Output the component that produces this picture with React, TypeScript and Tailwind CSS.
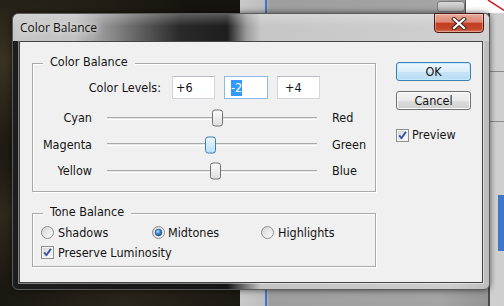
import React from "react";

const ui = "font-['DejaVu_Sans_Condensed','DejaVu_Sans',sans-serif]";

function Radio({ checked }: { checked?: boolean }) {
  return (
    <svg width="13" height="13" viewBox="0 0 13 13" className="shrink-0">
      <defs>
        <linearGradient id="rOut" x1="0" y1="0" x2="1" y2="1">
          <stop offset="0" stopColor="#cfcfcf" />
          <stop offset="1" stopColor="#ffffff" />
        </linearGradient>
        <linearGradient id="rIn" x1="0" y1="0" x2="1" y2="1">
          <stop offset="0" stopColor="#d9d9d9" />
          <stop offset="1" stopColor="#f7f7f7" />
        </linearGradient>
        <radialGradient id="rDot" cx="0.4" cy="0.35" r="0.7">
          <stop offset="0" stopColor="#b9e3ff" />
          <stop offset="0.45" stopColor="#3f8fd4" />
          <stop offset="1" stopColor="#15477c" />
        </radialGradient>
      </defs>
      <circle cx="6.5" cy="6.5" r="6" fill="url(#rOut)" stroke="#8a8c8c" strokeWidth="1" />
      <circle cx="6.5" cy="6.5" r="4.3" fill="url(#rIn)" />
      {checked && <circle cx="6.5" cy="6.5" r="3.4" fill="url(#rDot)" stroke="#1d4f86" strokeWidth="0.6" />}
    </svg>
  );
}

function Check() {
  return (
    <svg width="13" height="13" viewBox="0 0 13 13" className="shrink-0">
      <defs>
        <linearGradient id="cIn" x1="0" y1="0" x2="1" y2="1">
          <stop offset="0" stopColor="#d6d6d6" />
          <stop offset="1" stopColor="#fbfbfb" />
        </linearGradient>
      </defs>
      <rect x="0.5" y="0.5" width="12" height="12" fill="#f4f4f4" stroke="#8e8f8f" />
      <rect x="2" y="2" width="9" height="9" fill="url(#cIn)" />
      <path d="M3.2 6.4 L5.4 9.2 L9.9 2.9" fill="none" stroke="#3b56a3" strokeWidth="1.9" strokeLinejoin="round" />
    </svg>
  );
}

function Slider({ left, right, value, hot }: { left: string; right: string; value: number; hot?: boolean }) {
  const pos = ((value + 100) / 200) * 199;
  return (
    <div className="flex h-[26.5px] items-center">
      <div className="w-[59px] text-right">{left}</div>
      <div className="relative ml-[15px] h-[3px] w-[210px] border-t border-b border-t-[#a9a9a9] border-b-white bg-[#e6e8e8]">
        <div
          className={
            hot
              ? "absolute top-1/2 h-[17px] w-[11px] -translate-y-1/2 rounded-[3px] border border-[#3c7fb1] bg-[linear-gradient(180deg,#eef8fe,#b7e0f7)]"
              : "absolute top-1/2 h-[17px] w-[11px] -translate-y-1/2 rounded-[3px] border border-[#707070] bg-[linear-gradient(180deg,#fdfdfd,#dedede)]"
          }
          style={{ left: pos }}
        />
      </div>
      <div className="ml-[15px]">{right}</div>
    </div>
  );
}

function Group({ title, className, children }: { title: string; className: string; children: React.ReactNode }) {
  return (
    <div className={"relative border border-[#a9a9a9] shadow-[inset_1px_1px_0_#ffffff,1px_1px_0_#ffffff] " + className}>
      <div className="absolute left-[10px] top-[-10px] h-[16px] bg-[#f0f0f0] px-[7px] leading-[16px]">{title}</div>
      {children}
    </div>
  );
}

export default function App() {
  return (
    <div className="relative h-[306px] w-[504px] overflow-hidden bg-[#17140f]">
      {/* desktop: dark photo on left */}
      <div className="absolute inset-0 bg-[radial-gradient(ellipse_at_2%_20%,#3a3322_0%,transparent_30%),radial-gradient(ellipse_at_3%_70%,#2f2a1d_0%,transparent_25%),radial-gradient(ellipse_at_25%_100%,#2a251b_0%,transparent_30%)]" />
      {/* photoshop panel on right */}
      <div className="absolute bottom-0 left-[240px] right-0 top-0 bg-[linear-gradient(90deg,#c9c9c9_0px,#bdbdbd_24px,#9e9e9e_30px,#a4a4a4_200px,#8e8e8e_264px)]">
        <div className="absolute bottom-0 left-[25px] top-0 w-[2px] bg-[#3d78c7]" />
        <div className="absolute left-[197px] top-[1px] h-[11px] w-[28px] rounded-[3px] border border-[#7a7a7a] bg-[linear-gradient(180deg,#d8d8d8,#b4b4b4)]" />
        <div className="absolute right-0 top-0 h-[13px] w-[39px] border-l border-[#555] bg-white">
          <svg width="39" height="13" className="absolute inset-0">
            <line x1="22" y1="0" x2="39" y2="11" stroke="#d21f1f" strokeWidth="1.5" />
          </svg>
        </div>
        <div className="absolute bottom-0 right-0 top-[13px] w-[16px] bg-[#cfcfcf]">
          <div className="absolute left-0 top-0 h-full w-[2px] bg-[#4b4b4b]" />
          <div className="absolute left-0 right-0 top-[58px] h-[1px] bg-[#8a8a8a]" />
          <div className="absolute left-0 right-0 top-[108px] h-[1px] bg-[#8a8a8a]" />
          <div className="absolute right-0 top-[182px] h-[56px] w-[6px] bg-[#3d78c7]" />
        </div>
      </div>

      {/* dialog window */}
      <div className="absolute left-[12px] top-[13px] flex h-[277px] w-[478px] flex-col rounded-[6px] border border-[#5b5b5b] bg-[linear-gradient(90deg,#1d1d1d_0%,#151515_45%,#7a7a7a_49%,#c3c3c3_52%,#cdcdcd_92%,#bdbdbd_100%)] shadow-[0_0_6px_rgba(0,0,0,0.6)]">
        {/* title bar */}
        <div className="relative h-[27px] shrink-0 rounded-t-[5px] bg-[linear-gradient(90deg,#c7c7c7_0%,#c0c0c0_13%,#6b6b6b_25%,#2a2a2a_35%,#1e1e1e_45%,#9a9a9a_49%,#c6c6c6_52%,#d1d1d1_100%)]">
          <div className="absolute inset-x-0 top-0 h-[12px] rounded-t-[5px] bg-[linear-gradient(180deg,rgba(255,255,255,0.25),rgba(255,255,255,0))]" />
          <div className="relative pl-[7px] pt-[6px] font-['Open_Sans',sans-serif] text-[12px] leading-[16px] text-[#111] [text-shadow:0_0_6px_#e6e6e6,0_0_10px_#e6e6e6]">
            Color Balance
          </div>
          <div className="absolute right-[5px] top-[-1px] flex h-[20px] w-[50px] items-center justify-center rounded-b-[4px] border border-[#4a1a10] bg-[linear-gradient(180deg,#e9a99b_0%,#dc8873_45%,#c43d22_52%,#c5492c_85%,#d97a5c_100%)] shadow-[inset_0_0_0_1px_rgba(255,255,255,0.35)]">
            <svg width="16" height="13" viewBox="0 0 16 13">
              <path d="M3 2 L13 11 M13 2 L3 11" stroke="#3b2a28" strokeWidth="4.2" strokeLinecap="square" />
              <path d="M3 2 L13 11 M13 2 L3 11" stroke="#ffffff" strokeWidth="2.2" strokeLinecap="square" />
            </svg>
          </div>
        </div>

        {/* client area */}
        <div className={"mx-[6px] h-[242px] shrink-0 border border-[#444] bg-[#f0f0f0] text-[12.5px] leading-[16px] text-[#141414] shadow-[0_0_0_1px_rgba(255,255,255,0.45)] " + ui}>
          <div className="flex pl-[12px] pt-[20px]">
            <div className="flex w-[344px] flex-col">
              <Group title="Color Balance" className="mt-[1px] h-[129px]">
                <div className="pt-[12px]">
                  <div className="flex items-center">
                    <div className="w-[128px] text-right">Color Levels:</div>
                    <div className="ml-[11px] flex gap-[9px]">
                      <div className="flex h-[23px] w-[43px] items-center border border-[#d2d5da] border-t-[#b9bcc2] bg-white pl-[3px]">+6</div>
                      <div className="flex h-[23px] w-[44px] items-center border border-[#8fb8e2] bg-white pl-[6px]">
                        <span className="bg-[#3399ff] leading-[16px] text-white">-2</span>
                      </div>
                      <div className="flex h-[23px] w-[43px] items-center border border-[#d2d5da] border-t-[#b9bcc2] bg-white pl-[7px]">+4</div>
                    </div>
                  </div>
                  <div className="mt-[6px]">
                    <Slider left="Cyan" right="Red" value={6} />
                    <Slider left="Magenta" right="Green" value={-2} hot />
                    <Slider left="Yellow" right="Blue" value={4} />
                  </div>
                </div>
              </Group>
              <Group title="Tone Balance" className="mt-[21px] h-[54px]">
                <div className="pl-[8px] pt-[8.5px]">
                  <div className="flex h-[20px] items-center">
                    <div className="flex w-[111px] items-center">
                      <Radio />
                      <span className="ml-[4px]">Shadows</span>
                    </div>
                    <div className="flex w-[109px] items-center">
                      <Radio checked />
                      <span className="ml-[3px]">Midtones</span>
                    </div>
                    <div className="flex items-center">
                      <Radio />
                      <span className="ml-[4px]">Highlights</span>
                    </div>
                  </div>
                  <div className="flex h-[20px] items-center">
                    <Check />
                    <span className="ml-[4px]">Preserve Luminosity</span>
                  </div>
                </div>
              </Group>
            </div>

            <div className="ml-[20px] flex w-[75px] flex-col">
              <div className="flex h-[19px] items-center justify-center rounded-[3px] border border-[#3c7fb1] bg-[linear-gradient(180deg,#edf7fd_0%,#dceef9_50%,#c7e4f6_51%,#b9dcf2_100%)] shadow-[inset_0_0_0_1px_#c3ebfd]">
                OK
              </div>
              <div className="mt-[10px] flex h-[19px] items-center justify-center rounded-[3px] border border-[#707070] bg-[linear-gradient(180deg,#f2f2f2_0%,#ebebeb_50%,#dddddd_51%,#cfcfcf_100%)] shadow-[inset_0_0_0_1px_#fcfcfc]">
                Cancel
              </div>
              <div className="mt-[17px] flex items-center">
                <Check />
                <span className="ml-[3px]">Preview</span>
              </div>
            </div>
          </div>
        </div>
      </div>
    </div>
  );
}
